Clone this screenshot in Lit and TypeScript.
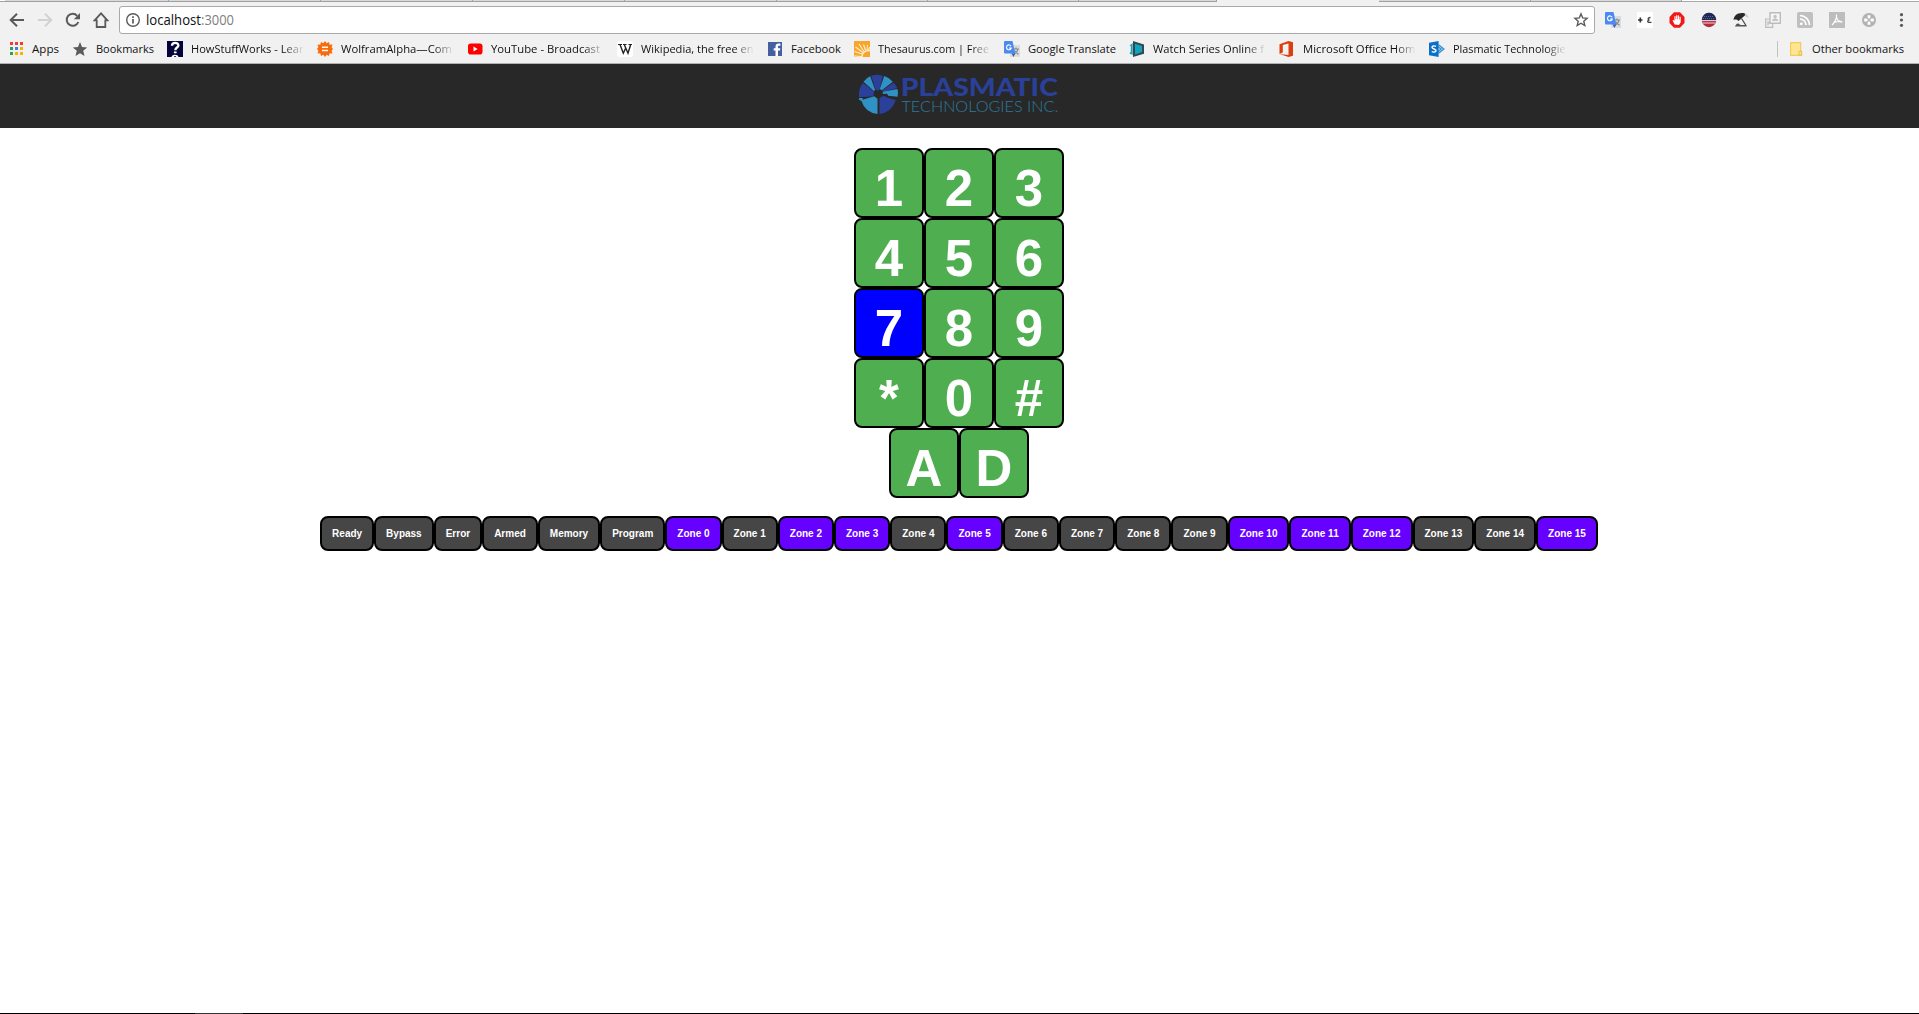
import { LitElement, html, svg, css } from "lit";
import { customElement, property } from "lit/decorators.js";

const translateIcon = svg`
  <rect x="6" y="4" width="10" height="12" fill="#dcdcdc"/>
  <path d="M9 8h6M12 6.500V8M14 8c-.5 2.500-2 4-4 5M10.500 9.500c1 1.500 2 2.700 4 3.700" stroke="#7d8b92" stroke-width="1.200" fill="none"/>
  <path d="M1 0h7.500l2.800 12.500H1a1 1 0 0 1-1-1V1a1 1 0 0 1 1-1z" fill="#4a89f3"/>
  <path d="M7.500 12.500h3.800L9.500 16z" fill="#3a5bb5"/>
  <path d="M7 5.200A2.400 2.400 0 1 0 7.200 7H5" stroke="#fff" stroke-width="1.200" fill="none"/>`;

const icons: Record<string, unknown> = {
  back: svg`<path d="M15 8H2M8 1.700 1.700 8 8 14.300" stroke="#5a5a5a" stroke-width="2" fill="none"/>`,
  forward: svg`<path d="M1 8h13M8 1.700 14.300 8 8 14.300" stroke="#d2d2d2" stroke-width="2" fill="none"/>`,
  reload: svg`<path d="M13.300 10A6 6 0 1 1 12.200 3.800" stroke="#5a5a5a" stroke-width="2" fill="none"/><path d="M15 1v6.200H8.800z" fill="#5a5a5a"/>`,
  home: svg`<path d="M8 1.300 1.600 8.300H3.700V15h8.600V8.300h2.100z" stroke="#5a5a5a" stroke-width="1.800" fill="none"/>`,
  info: svg`<circle cx="8" cy="8" r="6.300" stroke="#5a5a5a" stroke-width="1.400" fill="none"/><path d="M8 7v4.600M8 4.300v1.700" stroke="#5a5a5a" stroke-width="1.700"/>`,
  starLine: svg`<path d="m8 1.900 1.700 4 4.400.400-3.300 2.900 1 4.300L8 11.200l-3.800 2.300 1-4.300L1.900 6.300l4.400-.400z" stroke="#5a5a5a" stroke-width="1.400" fill="none"/>`,
  apps: svg`
    <path d="M2 1h3v3H2zM7 1h3v3H7zM12 1h3v3h-3z" fill="#f53b30"/>
    <path d="M2 6h3v3H2z" fill="#2fa24c"/><path d="M7 6h3v3H7z" fill="#2d87f0"/><path d="M12 6h3v3h-3z" fill="#f5b400"/>
    <path d="M2 11h3v3H2z" fill="#2fa24c"/><path d="M7 11h3v3H7zM12 11h3v3h-3z" fill="#f5b400"/>`,
  star: svg`<path d="m8 1 2 5 5.200.400-4 3.400 1.300 5.200L8 12.200 3.500 15l1.300-5.200-4-3.400L6 6z" fill="#5a5a5a"/>`,
  how: svg`<rect width="16" height="16" fill="#04043a"/>
    <path d="M5 4.800c0-4 6.400-3.800 6.400-.400 0 2.200-3.100 2.100-3.100 4.800" stroke="#fff" stroke-width="2.300" fill="none"/>
    <path d="M6.900 10.400h2.700v1.900H6.900zM4.500 16c.5-3 6.500-3 7 0H9.300c-.5-1.200-2-1.200-2.500 0z" fill="#fff"/>`,
  wolfram: svg`<path d="m8 0 1.700 2.300L12 1l.7 2.800 2.800-.2-.9 2.600L16 8l-1.400 1.800.9 2.600-2.800-.2L12 15l-2.300-1.300L8 16l-1.700-2.300L4 15l-.7-2.800-2.800.2.900-2.600L0 8l1.400-1.800L.5 3.600l2.800.2L4 1l2.300 1.300z" fill="#f96a0b"/>
    <path d="M5 6.300h6M5 9.500h6" stroke="#fff" stroke-width="1.400"/>`,
  youtube: svg`<rect x="1" y="2.500" width="14.500" height="11" rx="2.800" fill="#f00"/><path d="M6.500 5.600v4.800L10.600 8z" fill="#fff"/>`,
  wikipedia: svg`<rect width="16" height="16" rx="3" fill="#fff"/>
    <path d="M1 3.500h4M6 3.500h3.500M11.500 3.500H15" stroke="#222" stroke-width="1"/>
    <path d="M3 3.500 6.300 12.300 8.500 7.500M7.200 3.500 11 12.300l2.700-8.800" stroke="#222" stroke-width="1.400" fill="none"/>`,
  facebook: svg`<path d="M1 1h14v14H1z" fill="#4460a0"/><path d="M8.500 15V9.500H6.700V7.200h1.800V5.500c0-2 1.200-3 3-3h1.900v2.300h-1.200c-1 0-1.200.400-1.200 1.100v1.300h2.300l-.3 2.300h-2V15z" fill="#fff"/>`,
  thesaurus: svg`<rect width="16" height="16" fill="#f9a42a"/>
    <path d="M8 15.500 0 15M8 13 .5 10.500M9 11.500 1.500 6M10 10.500 5 3M11.500 9.500 9.500 3.500M13 9l.5-5M14 9.500 16 6" stroke="#fff0cc" stroke-width="1.100"/>
    <path d="M8 16c0-4 2-6.500 8-6.500" stroke="#fff0cc" stroke-width="1.300" fill="none"/>`,
  translate: translateIcon,
  watch: svg`<path d="M4 0 15 3.500v9.200L4 16z" fill="#37474f"/><path d="M6 2.800 13 5v6L6 13.500z" fill="#11a5bd"/><path d="M3.700 2v12L.5 12.500l1.300-2V5L.5 4.500z" fill="#1aa1b9"/>`,
  office: svg`<path d="M.5 3.200 9.500 0 14 1.300v13.400L9.500 16 .5 12.900l9 1V2.500l-5.700 1.400v7.500L.5 12.900z" fill="#dc3e0d"/>`,
  sharepoint: svg`<path d="M9.500 3.700 14.800 8l-5.300 4.300M9 5.800 12 8l-3 2.500" stroke="#3491d2" stroke-width="1.400" fill="none"/>
    <path d="M0 1.800 9.600 0v16L0 14.200z" fill="#0b70c5"/><path d="M7 5.400C5.500 4.600 3 4.700 3 6.300c0 2 4 1.400 4 3.400 0 1.500-2.600 1.800-4.200.8" stroke="#fff" stroke-width="1.400" fill="none"/>`,
  folder: svg`<path d="M2.600 1.600h10v8.800h1v4h-11z" fill="#ffe591" stroke="#efcd5f" stroke-width="1.200"/><path d="M11 14v-3.600h2.300V14z" fill="#fff0b5" stroke="#e5bd45"/>`,
  plusPerson: svg`<rect width="16" height="16" fill="#fff"/><path d="M1 8h4.500M3.300 5.500v5" stroke="#333" stroke-width="1.600"/><path d="M13.500 5.500c-3 0-3 2.500-1 2.500-2 0-2.500 2.300-.5 2.300h2.500" stroke="#444" stroke-width="1.300" fill="none"/>`,
  adblock: svg`<path d="M5 .3h6L15.500 5v6L11 15.700H5L.5 11V5z" fill="#f11818"/>
    <path d="M5.600 12.500 3.500 8.200l1-.3.900 1V4.200h1.200v3h.5v-4h1.200v4h.5V3.500H10v4h.5V4.700h1.200v5.500L10 13z" fill="#fff"/>`,
  flag: svg`<circle cx="8" cy="8" r="7.200" fill="#b52a3c"/><path d="M.8 8a7.200 7.200 0 0 1 14.400 0z" fill="#1d2a58"/>
    <path d="M3 4.500h10M2 6.600h12" stroke="#7883a5" stroke-width=".7" stroke-dasharray="1 1"/><path d="M.9 8.600h14.200M1.800 11h12.400" stroke="#eee" stroke-width=".9"/>`,
  umbrella: svg`<path d="M.5 8C1 3 5 0 11.500 1.200L13 2.500 5.500 9C4 7.500 2 7.200.5 8z" fill="#292929"/><path d="M11.500 1.200c2.500.8 4 2.500 4 4.800l-3-1.500z" fill="#ccc"/><path d="M8.500 6.500 13 13.500" stroke="#444" stroke-width="1.200"/><path d="M2 14.500c1.500-4 3.500-3.500 5.500-1.500h6v1.500z" fill="#555"/>`,
  cards: svg`<path d="M5 .7h10.300v10.500H5z" fill="#f5f5f5" stroke="#bcbcbc" stroke-width="1.400"/><circle cx="10.100" cy="4.500" r="1.700" fill="#c4c4c4"/><path d="M7 9c.5-3.600 5.800-3.600 6.300 0z" fill="#c4c4c4"/><path d="M4 7H.7v8.300h7V12M3 9v4.500M3 11h2" stroke="#bcbcbc" stroke-width="1.200" fill="none"/>`,
  rss: svg`<rect width="16" height="16" rx="2" fill="#c0c0c0"/><circle cx="4.300" cy="11.800" r="1.400" fill="#fff"/><path d="M3 7a6 6 0 0 1 6 6M3 3.500A9.500 9.500 0 0 1 12.500 13" stroke="#fff" stroke-width="1.700" fill="none"/>`,
  pdf: svg`<rect width="16" height="16" fill="#bdbdbd"/><path d="M7.300 2.500c1 2-.5 7-4.300 10.500M7.500 5c.5 3 3 5 5.800 5.200M4.500 10.800c2.500-1.300 5-1.800 8.500-1.300" stroke="#fff" stroke-width="1.200" fill="none"/>`,
  target: svg`<circle cx="8" cy="8" r="7" fill="#b3b3b3"/><path d="M6.600 3.200h2.800v2.400L8 7 6.600 5.600zM6.600 12.800h2.800v-2.400L8 9l-1.400 1.400zM3.200 6.600v2.800h2.400L7 8 5.600 6.600zM12.800 6.600v2.800h-2.400L9 8l1.400-1.400z" fill="#fff"/>`,
  menu: svg`<circle cx="8.500" cy="2.700" r="1.600" fill="#5a5a5a"/><circle cx="8.500" cy="8" r="1.600" fill="#5a5a5a"/><circle cx="8.500" cy="13.300" r="1.600" fill="#5a5a5a"/>`,
};

const icon = (name: string) =>
  html`<svg class="icon" width="16" height="16" viewBox="0 0 16 16">${icons[name]}</svg>`;

/** A bookmark: icon, label, drawn text length, label box width, and whether the label fades out. */
interface Bookmark { icon: string; text: string; length: number; box: number; cut?: boolean }

const bookmarks: Bookmark[] = [
  { icon: "apps", text: "Apps", length: 27, box: 27 },
  { icon: "star", text: "Bookmarks", length: 58, box: 58 },
  { icon: "how", text: "HowStuffWorks - Lear", length: 112.5, box: 113, cut: true },
  { icon: "wolfram", text: "WolframAlpha—Com", length: 111, box: 113, cut: true },
  { icon: "youtube", text: "YouTube - Broadcast", length: 109, box: 113, cut: true },
  { icon: "wikipedia", text: "Wikipedia, the free en", length: 112.5, box: 113, cut: true },
  { icon: "facebook", text: "Facebook", length: 50, box: 50 },
  { icon: "thesaurus", text: "Thesaurus.com | Free", length: 111, box: 113, cut: true },
  { icon: "translate", text: "Google Translate", length: 88, box: 88 },
  { icon: "watch", text: "Watch Series Online f", length: 111, box: 113, cut: true },
  { icon: "office", text: "Microsoft Office Hom", length: 112.5, box: 113, cut: true },
  { icon: "sharepoint", text: "Plasmatic Technologie", length: 112.5, box: 113, cut: true },
];

const label = (text: string, length: number, box: number, cut = false) => html`
  <svg class="label ${cut ? "cut" : ""}" width=${box} height="18">
    <text x="0" y="13" textLength=${length} lengthAdjust="spacingAndGlyphs">${text}</text>
  </svg>`;

@customElement("browser-chrome")
class BrowserChrome extends LitElement {
  static styles = css`
    :host { display: block; height: 64px; box-sizing: border-box; background: #f1f1f1; border-bottom: 1px solid #b1b1b1; font-family: "Open Sans", "Noto Sans", sans-serif; }
    svg { display: block; flex: none; }
    .tabs { display: flex; height: 2px; box-sizing: border-box; }
    .tab { box-sizing: border-box; border-bottom: 1px solid #a0a0a0; border-right: 1px solid #a0a0a0; background: #d9d9d9; }
    .edge { width: 5px; background: #fff; border-bottom: 1px solid #a0a0a0; box-sizing: border-box; }
    .active { width: 162px; }
    .rest { flex: 1; background: #fff; border-bottom: 1px solid #a9a9a9; box-sizing: border-box; }
    .nav { display: flex; align-items: center; height: 28px; margin-top: 4px; padding: 0 10px 0 9px; }
    .buttons { display: flex; gap: 12px; }
    .omnibox { display: flex; align-items: center; box-sizing: border-box; width: 1476px; height: 28px; margin-left: 10px; padding: 0 5px; border: 1px solid #a9a9a9; border-radius: 3px; background: #fff; }
    .url { margin-left: 5px; }
    .url text { font-size: 14px; fill: #111; }
    .url .port { fill: #808080; }
    .spacer { flex: 1; }
    .extensions { display: flex; gap: 16px; margin-left: 10px; }
    .bookmarks { display: flex; align-items: center; height: 30px; padding: 0 15px 0 8px; }
    .label { margin: 0 13px 0 8px; overflow: visible; }
    .label text { font-size: 11.5px; fill: #111; }
    .cut { mask-image: linear-gradient(to right, #000 82%, transparent 100%); }
    .divider { width: 1px; height: 16px; margin-right: 10px; background: #c2c2c2; }
    .bookmarks .label:last-child { margin-right: 0; }
  `;

  render() {
    const before = [164, 152, 152, 152, 152, 151, 151, 138];
    const after = [152, 151];
    const tab = (w: number) => html`<div class="tab" style="width:${w}px"></div>`;
    return html`
      <div class="tabs">
        <div class="edge"></div>${before.map(tab)}<div class="active"></div>${after.map(tab)}<div class="rest"></div>
      </div>
      <div class="nav">
        <div class="buttons">${["back", "forward", "reload", "home"].map(icon)}</div>
        <div class="omnibox">
          ${icon("info")}
          <svg class="url" width="100" height="22">
            <text x="0" y="16" textLength="55" lengthAdjust="spacingAndGlyphs">localhost</text>
            <text class="port" x="55" y="16" textLength="33" lengthAdjust="spacingAndGlyphs">:3000</text>
          </svg>
          <div class="spacer"></div>
          ${icon("starLine")}
        </div>
        <div class="extensions">
          ${["translate", "plusPerson", "adblock", "flag", "umbrella", "cards", "rss", "pdf", "target", "menu"].map(icon)}
        </div>
      </div>
      <div class="bookmarks">
        ${bookmarks.map((b) => html`${icon(b.icon)}${label(b.text, b.length, b.box, b.cut)}`)}
        <div class="spacer"></div>
        <div class="divider"></div>
        ${icon("folder")}${label("Other bookmarks", 92, 92)}
      </div>`;
  }
}

@customElement("site-header")
class SiteHeader extends LitElement {
  static styles = css`
    :host { display: flex; justify-content: center; box-sizing: border-box; height: 64px; padding: 9px 2px 0 0; background: #282828; }
    .logo { display: block; }
    .name { font: 900 75px Lato, sans-serif; fill: #2a4099; }
    .sub { font: 300 44px Lato, sans-serif; fill: #2b7ba0; }
  `;

  render() {
    return html`
      <svg class="logo" width="200" height="42" viewBox="58.500 39 600 126">
        <g fill="#2a4099">
          <path d="M95 47Q113 41 130 47L120 91H109z"/>
          <path d="M70 68 104 95 101 109 58 112Q56 87 70 68z"/>
          <path d="M162 68Q171 76 173 84L132 96 127 92z"/>
          <path d="M120 162V114L132 107 145 113 169 121Q156 158 120 162z"/>
        </g>
        <g fill="#3091c5">
          <path d="M92 49 107 90 103 93 72 65Q80 54 92 49z"/>
          <path d="M134 48Q150 53 160 65L127 91 121 87z"/>
          <path d="M130 95 174 87Q177 99 174 110L146 107 143 101 130 102z"/>
          <path d="M58 114 70 114 69 119 104 109 114 116V162Q77 158 66 123L58 119z"/>
        </g>
        <text class="name" x="184" y="108" textLength="471" lengthAdjust="spacingAndGlyphs">PLASMATIC</text>
        <text class="sub" x="186" y="155" textLength="470" lengthAdjust="spacingAndGlyphs">TECHNOLOGIES INC.</text>
      </svg>`;
  }
}

@customElement("key-pad")
class KeyPad extends LitElement {
  @property() pressed = "";

  static styles = css`
    :host { display: flex; flex-direction: column; align-items: center; }
    .row { display: flex; }
    .key { box-sizing: border-box; width: 70px; height: 70px; padding-top: 10px; border: 2px solid #000; border-radius: 8px; background: #4faf50; color: #fff; font: bold 51px/57px "Liberation Sans", Arial, sans-serif; text-align: center; }
    .pressed { background: #00f; }
  `;

  render() {
    return ["123", "456", "789", "*0#", "AD"].map((row) => html`
      <div class="row">
        ${[...row].map((k) => html`<div class="key ${k === this.pressed ? "pressed" : ""}">${k}</div>`)}
      </div>`);
  }
}

@customElement("status-bar")
class StatusBar extends LitElement {
  static styles = css`
    :host { display: flex; justify-content: center; }
    .light { box-sizing: border-box; height: 35px; padding: 10px; border: 2px solid #000; border-radius: 8px; background: #464646; color: #fff; font: bold 10px/11px "Liberation Sans", Arial, sans-serif; white-space: nowrap; }
    .on { background: #60f; }
  `;

  render() {
    const active = new Set([0, 2, 3, 5, 10, 11, 12, 15]);
    const zones = Array.from({ length: 16 }, (_, i) => ({ text: `Zone ${i}`, on: active.has(i) }));
    const states = ["Ready", "Bypass", "Error", "Armed", "Memory", "Program"].map((text) => ({ text, on: false }));
    return [...states, ...zones].map((l) => html`<div class="light ${l.on ? "on" : ""}">${l.text}</div>`);
  }
}

@customElement("app-root")
class AppRoot extends LitElement {
  static styles = css`
    :host { display: flex; flex-direction: column; height: 100vh; overflow: hidden; background: #fff; }
    .main { flex: 1; padding: 20px 1px 0 0; }
    .lights { margin-top: 18px; }
    .taskbar { display: flex; height: 1px; padding-left: 195px; background: #000; }
    .task { width: 48px; background: #333; }
  `;

  render() {
    return html`
      <browser-chrome></browser-chrome>
      <site-header></site-header>
      <div class="main">
        <key-pad pressed="7"></key-pad>
        <status-bar class="lights"></status-bar>
      </div>
      <div class="taskbar"><div class="task"></div></div>`;
  }
}
